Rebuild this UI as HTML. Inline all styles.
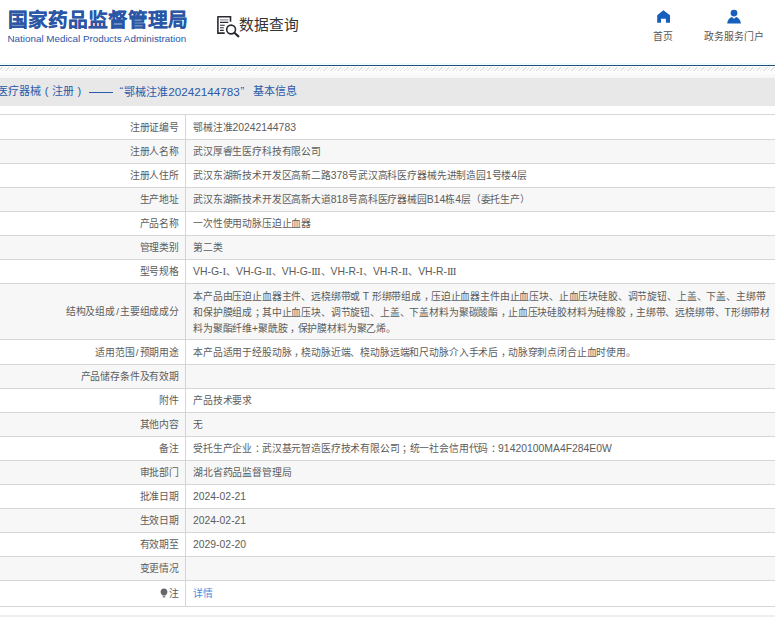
<!DOCTYPE html>
<html lang="zh-CN">
<head>
<meta charset="utf-8">
<style>
html,body{margin:0;padding:0;}
body{width:775px;height:617px;overflow:hidden;position:relative;background:#fff;font-family:"Liberation Sans",sans-serif;color:#555;}
.a{position:absolute;white-space:nowrap;}
#logo-cn{left:7.5px;top:7px;font-size:19.7px;font-weight:bold;color:#2a56a6;-webkit-text-stroke:0.15px #2a56a6;line-height:26px;letter-spacing:0px;}
#logo-en{left:7.5px;top:33px;font-size:9.84px;color:#2a56a6;line-height:12px;}
#dq{left:238.5px;top:15px;font-size:14.76px;color:#333;line-height:20px;}
.nav{font-size:9.84px;color:#555;line-height:12px;margin-top:1.5px;}
#topline{left:0;top:65px;width:775px;height:1px;background:#264e7c;}
#topglow{left:0;top:63px;width:775px;height:2px;background:#effbfd;}
#stripes{left:0;top:66.5px;width:775px;height:4px;background:repeating-linear-gradient(135deg,#fff 0,#fff 1.3px,#e3e3e3 1.3px,#e3e3e3 2.3px,#fff 2.3px,#fff 2.47px);}
#grad{left:0;top:71px;width:775px;height:7px;background:linear-gradient(#fefefe,#f6f6f6);}
#crumb{left:0;top:78px;width:775px;height:27.5px;background:#e8e8e8;}
.ct{top:84px;font-size:11px;line-height:15px;color:#2a5aa8;}
.lp{font-size:11px;}
.lq{font-size:11px;}
.cn{font-size:11.7px;}
.row{position:absolute;left:0;width:775px;}
.row.g{background:#f7f7f7;}
.hl{position:absolute;left:0;width:775px;height:1px;background:#d6d6d6;}
#vl{left:185px;top:114px;width:1px;height:492px;background:#d6d6d6;}
.sl{padding:0 1.2px;}
.fp{position:relative;left:2.5px;}
.n{font-size:10.4px;letter-spacing:0;}
.r{font-family:"Liberation Serif",serif;font-size:11.2px;letter-spacing:-0.9px;margin-right:0.9px;}
.lab{position:absolute;right:596px;font-size:9.84px;letter-spacing:-0.16px;color:#5c5c5c;white-space:nowrap;text-align:right;}
.val{position:absolute;left:193px;font-size:9.84px;letter-spacing:-0.16px;color:#5c5c5c;white-space:nowrap;}
#foot{left:0;top:615px;width:775px;height:2px;background:#eeeeee;}
</style>
</head>
<body>
<div class="a" id="logo-cn">国家药品监督管理局</div>
<div class="a" id="logo-en">National Medical Products Administration</div>

<svg class="a" style="left:214px;top:13px" width="28" height="26" viewBox="0 0 28 26">
  <path d="M3.9 3.8 H16.5 V8.8" fill="none" stroke="#2a2a33" stroke-width="1.6"/>
  <path d="M3.9 3.2 V20.1 H10.7" fill="none" stroke="#2a2a33" stroke-width="1.6"/>
  <path d="M6 6.9 H14.3" stroke="#888" stroke-width="1.1"/>
  <path d="M6 9.4 H14.3 M6 12.2 H10.7 M6 14.7 H9.8 M6 17.4 H9.8" stroke="#2a2a33" stroke-width="1.1"/>
  <circle cx="17.1" cy="16.5" r="4.4" fill="#fff" stroke="#2a2a33" stroke-width="1.6"/>
  <path d="M20.4 19.8 L24.4 23.4" stroke="#2a2a33" stroke-width="2.1" stroke-linecap="round"/>
</svg>
<div class="a" id="dq">数据查询</div>

<svg class="a" style="left:655px;top:8px" width="18" height="18" viewBox="0 0 18 18">
  <path d="M8.4 2.2 L15 7.3 V14.8 H10.9 V10.8 H6 V14.8 H2.2 V7.3 Z" fill="#1660bc"/>
</svg>
<div class="a nav" style="left:653px;top:29px">首页</div>

<svg class="a" style="left:725px;top:8px" width="18" height="18" viewBox="0 0 18 18">
  <circle cx="9" cy="5.1" r="3.4" fill="#1660bc"/>
  <path d="M2.2 15.4 C2.5 12 4.5 9.6 6.8 9 L9 10.8 L11.2 9 C13.5 9.6 15.6 12 15.9 15.4 Z" fill="#1660bc"/>
</svg>
<div class="a nav" style="left:704px;top:29px">政务服务门户</div>

<div class="a" id="topglow"></div>
<div class="a" id="topline"></div>
<div class="a" id="stripes"></div>
<div class="a" id="grad"></div>
<div class="a" id="crumb"></div>
<div class="a ct" style="left:-3.5px">医疗器械</div>
<div class="a ct lp" style="left:44.8px">(</div>
<div class="a ct" style="left:51.8px">注册</div>
<div class="a ct lp" style="left:77.6px">)</div>
<div class="a" style="left:89px;top:92px;width:24px;height:1px;background:#2a5aa8"></div>
<div class="a ct lq" style="left:119.6px">&#8220;</div>
<div class="a ct" style="left:124.2px">鄂械注准<span class="cn">20242144783</span></div>
<div class="a ct lq" style="left:240.6px">&#8221;</div>
<div class="a ct" style="left:252.6px">基本信息</div>

<div id="rows">
<div class="row" style="top:115px;height:24px"></div>
<div class="hl" style="top:114px"></div>
<div class="lab" style="top:120.50px;line-height:13px">注册证编号</div>
<div class="val" style="top:120.50px;line-height:13px">鄂械注准<span class="n">20242144783</span></div>
<div class="row g" style="top:140px;height:23px"></div>
<div class="hl" style="top:139px"></div>
<div class="lab" style="top:145.00px;line-height:13px">注册人名称</div>
<div class="val" style="top:145.00px;line-height:13px">武汉厚睿生医疗科技有限公司</div>
<div class="row" style="top:164px;height:23px"></div>
<div class="hl" style="top:163px"></div>
<div class="lab" style="top:169.00px;line-height:13px">注册人住所</div>
<div class="val" style="top:169.00px;line-height:13px">武汉东湖新技术开发区高新二路<span class="n">378</span>号武汉高科医疗器械先进制造园<span class="n">1</span>号楼<span class="n">4</span>层</div>
<div class="row g" style="top:188px;height:23px"></div>
<div class="hl" style="top:187px"></div>
<div class="lab" style="top:193.00px;line-height:13px">生产地址</div>
<div class="val" style="top:193.00px;line-height:13px">武汉东湖新技术开发区高新大道<span class="n">818</span>号高科医疗器械园<span class="n">B14</span>栋<span class="n">4</span>层（委托生产）</div>
<div class="row" style="top:212px;height:23px"></div>
<div class="hl" style="top:211px"></div>
<div class="lab" style="top:217.00px;line-height:13px">产品名称</div>
<div class="val" style="top:217.00px;line-height:13px">一次性使用动脉压迫止血器</div>
<div class="row g" style="top:236px;height:23px"></div>
<div class="hl" style="top:235px"></div>
<div class="lab" style="top:241.00px;line-height:13px">管理类别</div>
<div class="val" style="top:241.00px;line-height:13px">第二类</div>
<div class="row" style="top:260px;height:23px"></div>
<div class="hl" style="top:259px"></div>
<div class="lab" style="top:265.00px;line-height:13px">型号规格</div>
<div class="val" style="top:265.00px;line-height:13px"><span class="n">VH-G-</span><span class="r">I</span>、<span class="n">VH-G-</span><span class="r">II</span>、<span class="n">VH-G-</span><span class="r">III</span>、<span class="n">VH-R-</span><span class="r">I</span>、<span class="n">VH-R-</span><span class="r">II</span>、<span class="n">VH-R-</span><span class="r">III</span></div>
<div class="row g" style="top:284px;height:55px"></div>
<div class="hl" style="top:283px"></div>
<div class="lab" style="top:305.00px;line-height:13px">结构及组成<span class=sl>/</span>主要组成成分</div>
<div class="val" style="top:289.27px;line-height:15.65px">本产品由压迫止血器主件、远桡绑带或 <span class="n">T</span> 形绑带组成<span class="fp">，</span>压迫止血器主件由止血压块、止血压块硅胶、调节旋钮、上盖、下盖、主绑带</div>
<div class="val" style="top:304.92px;line-height:15.65px">和保护膜组成<span class="fp">；</span>其中止血压块、调节旋钮、上盖、下盖材料为聚碳酸酯<span class="fp">，</span>止血压块硅胶材料为硅橡胶<span class="fp">，</span>主绑带、远桡绑带、<span class="n">T</span>形绑带材</div>
<div class="val" style="top:320.57px;line-height:15.65px">料为聚酯纤维<span class="n">+</span>聚酰胺<span class="fp">，</span>保护膜材料为聚乙烯。</div>
<div class="row" style="top:340px;height:24px"></div>
<div class="hl" style="top:339px"></div>
<div class="lab" style="top:345.50px;line-height:13px">适用范围<span class=sl>/</span>预期用途</div>
<div class="val" style="top:345.50px;line-height:13px">本产品适用于经股动脉<span class="fp">，</span>桡动脉近端、桡动脉远端和尺动脉介入手术后<span class="fp">，</span>动脉穿刺点闭合止血时使用。</div>
<div class="row g" style="top:365px;height:23px"></div>
<div class="hl" style="top:364px"></div>
<div class="lab" style="top:370.00px;line-height:13px">产品储存条件及有效期</div>
<div class="row" style="top:389px;height:23px"></div>
<div class="hl" style="top:388px"></div>
<div class="lab" style="top:394.00px;line-height:13px">附件</div>
<div class="val" style="top:394.00px;line-height:13px">产品技术要求</div>
<div class="row g" style="top:413px;height:23px"></div>
<div class="hl" style="top:412px"></div>
<div class="lab" style="top:418.00px;line-height:13px">其他内容</div>
<div class="val" style="top:418.00px;line-height:13px">无</div>
<div class="row" style="top:437px;height:23px"></div>
<div class="hl" style="top:436px"></div>
<div class="lab" style="top:442.00px;line-height:13px">备注</div>
<div class="val" style="top:442.00px;line-height:13px">受托生产企业<span class="fp">：</span>武汉基元智造医疗技术有限公司<span class="fp">；</span>统一社会信用代码<span class="fp">：</span><span class="n">91420100MA4F284E0W</span></div>
<div class="row g" style="top:461px;height:23px"></div>
<div class="hl" style="top:460px"></div>
<div class="lab" style="top:466.00px;line-height:13px">审批部门</div>
<div class="val" style="top:466.00px;line-height:13px">湖北省药品监督管理局</div>
<div class="row" style="top:485px;height:23px"></div>
<div class="hl" style="top:484px"></div>
<div class="lab" style="top:490.00px;line-height:13px">批准日期</div>
<div class="val" style="top:490.00px;line-height:13px"><span class="n">2024-02-21</span></div>
<div class="row g" style="top:509px;height:23px"></div>
<div class="hl" style="top:508px"></div>
<div class="lab" style="top:514.00px;line-height:13px">生效日期</div>
<div class="val" style="top:514.00px;line-height:13px"><span class="n">2024-02-21</span></div>
<div class="row" style="top:533px;height:23px"></div>
<div class="hl" style="top:532px"></div>
<div class="lab" style="top:538.00px;line-height:13px">有效期至</div>
<div class="val" style="top:538.00px;line-height:13px"><span class="n">2029-02-20</span></div>
<div class="row g" style="top:557px;height:23px"></div>
<div class="hl" style="top:556px"></div>
<div class="lab" style="top:562.00px;line-height:13px">变更情况</div>
<div class="row" style="top:581px;height:25px"></div>
<div class="hl" style="top:580px"></div>
<div class="lab" style="top:587.00px;line-height:13px"><svg width="8" height="10" viewBox="0 0 8 10" style="vertical-align:-1px;margin-right:1px"><path d="M4 0.6 C6.1 0.6 7.4 2.1 7.4 4 C7.4 5.6 6.2 6.4 5.6 7.6 H2.4 C1.8 6.4 0.6 5.6 0.6 4 C0.6 2.1 1.9 0.6 4 0.6 Z" fill="#666"/><rect x="2.6" y="8" width="2.8" height="1.6" rx="0.6" fill="#888"/></svg>注</div>
<div class="val" style="top:587.00px;line-height:13px;color:#4a8ae0">详情</div>
<div class="hl" style="top:606px"></div>
</div><!--/rows-->

<div class="a" id="vl"></div>
<div class="a" id="foot"></div>
</body>
</html>
